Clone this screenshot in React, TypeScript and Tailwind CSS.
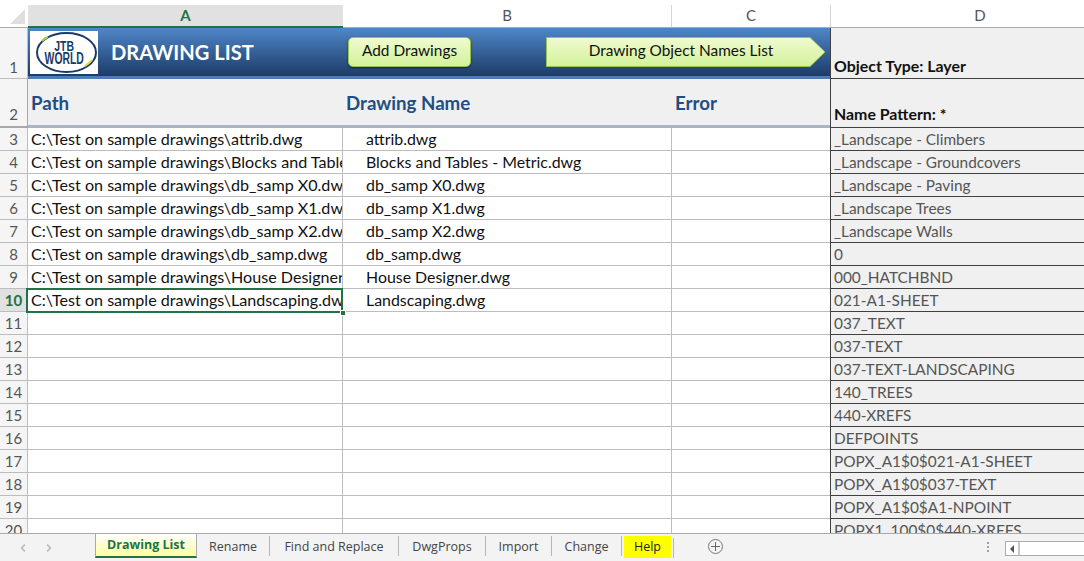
import React from 'react';
import { ChevronLeft, ChevronRight } from 'lucide-react';

const font = "font-['Lato','Noto_Sans',sans-serif]";

const files = [
  ['attrib.dwg', '_Landscape - Climbers'],
  ['Blocks and Tables - Metric.dwg', '_Landscape - Groundcovers'],
  ['db_samp X0.dwg', '_Landscape - Paving'],
  ['db_samp X1.dwg', '_Landscape Trees'],
  ['db_samp X2.dwg', '_Landscape Walls'],
  ['db_samp.dwg', '0'],
  ['House Designer.dwg', '000_HATCHBND'],
  ['Landscaping.dwg', '021-A1-SHEET'],
  ['', '037_TEXT'],
  ['', '037-TEXT'],
  ['', '037-TEXT-LANDSCAPING'],
  ['', '140_TREES'],
  ['', '440-XREFS'],
  ['', 'DEFPOINTS'],
  ['', 'POPX_A1$0$021-A1-SHEET'],
  ['', 'POPX_A1$0$037-TEXT'],
  ['', 'POPX_A1$0$A1-NPOINT'],
  ['', 'POPX1_100$0$440-XREFS'],
];

const tabs = [
  { name: 'Rename', w: 'w-[72px]' },
  { name: 'Find and Replace', w: 'w-[128px]' },
  { name: 'DwgProps', w: 'w-[86px]' },
  { name: 'Import', w: 'w-[65px]' },
  { name: 'Change', w: 'w-[69px]' },
];

const Logo = () => (
  <div className="relative w-[68px] h-[43px] bg-white flex flex-col items-center justify-center ml-[2px] shrink-0 text-[#1c3a66] font-['Liberation_Sans',sans-serif] font-bold leading-[13px]">
    <svg className="absolute left-[6px] top-[1px]" width="61" height="41" viewBox="0 0 61 41">
      <ellipse cx="30.5" cy="20.5" rx="29.5" ry="19.5" fill="none" stroke="#1c3a66" strokeWidth="2" />
      <path d="M6 9 Q9 6 12 5" fill="none" stroke="#a8c83c" strokeWidth="2" />
      <path d="M49 34 Q53 31 56 28" fill="none" stroke="#e6dc3c" strokeWidth="2" />
    </svg>
    <span className="text-[15px] scale-x-[0.7]">JTB</span>
    <span className="text-[16px] scale-x-[0.65]">WORLD</span>
  </div>
);

const Row = ({ n, b, d, selected }: { n: number; b: string; d: string; selected: boolean }) => (
  <div className="flex h-[23px] shrink-0">
    <div className={`w-[28px] shrink-0 flex items-center justify-center border-r border-b border-[#bdbdbd] text-[15px] ${selected ? 'bg-[#e1e1e1] text-[#217346] font-bold border-r-[#217346]' : 'bg-[#f5f5f5] text-[#555]'}`}>
      {n}
    </div>
    <div className="w-[315px] shrink-0 border-r border-b border-[#bdbdbd] bg-white pl-[3px] leading-[21px] text-[16.1px] text-[#111] whitespace-nowrap overflow-hidden">
      {b ? `C:\\Test on sample drawings\\${b}` : ''}
    </div>
    <div className="w-[329px] shrink-0 border-r border-b border-[#bdbdbd] bg-white pl-[23px] leading-[21px] text-[15.9px] text-[#111] whitespace-nowrap overflow-hidden">
      {b}
    </div>
    <div className="w-[159px] shrink-0 border-r border-b border-[#bdbdbd] bg-white" />
    <div className="flex-1 bg-[#f0f0f0] border-l border-b border-[#404040] -ml-px pl-[3px] leading-[23px] text-[15.4px] text-[#555] whitespace-nowrap overflow-hidden">
      {d}
    </div>
  </div>
);

export default function App() {
  return (
    <div className={`relative h-[561px] w-[1084px] overflow-hidden flex flex-col bg-white ${font}`}>
      {/* Column headers */}
      <div className="flex h-[28px] shrink-0 pt-[5px] border-b border-[#ababab] text-[15px] text-[#555] text-center leading-[21px]">
        <div className="w-[28px] shrink-0 flex items-end justify-end pr-[3px] pb-[3px]">
          <div className="w-0 h-0 border-l-[15px] border-l-transparent border-b-[15px] border-b-[#dfdfdf]" />
        </div>
        <div className="w-[315px] shrink-0 bg-[#e1e1e1] text-[#217346] font-bold border-b-2 border-[#217346] h-[23px]">A</div>
        <div className="w-[329px] shrink-0 border-r border-[#d4d4d4]">B</div>
        <div className="w-[159px] shrink-0 border-r border-[#d4d4d4]">C</div>
        <div className="w-[298px] shrink-0">D</div>
      </div>

      {/* Row 1: banner */}
      <div className="flex h-[51px] shrink-0">
        <div className="w-[28px] shrink-0 bg-[#f5f5f5] border-r border-b border-[#bdbdbd] flex items-end justify-center text-[15px] text-[#555] leading-[22px]">1</div>
        <div className="w-[803px] shrink-0 flex items-center pb-[3px] bg-[linear-gradient(#4f86c8,#1c3c68_94%,#4f7cb4_94%)]">
          <Logo />
          <div className="ml-[13px] w-[237px] shrink-0 text-white font-bold text-[20.1px] whitespace-nowrap">DRAWING LIST</div>
          <div className="w-[123px] h-[30px] shrink-0 pb-[2px] rounded-[5px] border border-[#9cc24e] bg-[linear-gradient(#f0fbd0,#d2f29a)] shadow-[0_1px_2px_rgba(0,0,0,0.5)] flex items-center justify-center text-[15.4px] text-[#111]">
            Add Drawings
          </div>
          <div className="relative ml-[75px] w-[280px] h-[30px] shrink-0 pb-[2px] flex items-center justify-center text-[15.4px] text-[#111]">
            <svg className="absolute inset-0" width="280" height="30" viewBox="0 0 280 30">
              <defs>
                <linearGradient id="arrowFill" x1="0" y1="0" x2="0" y2="1">
                  <stop offset="0" stopColor="#f0fbd0" />
                  <stop offset="1" stopColor="#d2f29a" />
                </linearGradient>
              </defs>
              <path d="M0.5 0.5H264L279 15L264 29.5H0.5Z" fill="url(#arrowFill)" stroke="#9cc24e" />
            </svg>
            <span className="relative pr-[10px]">Drawing Object Names List</span>
          </div>
        </div>
        <div className="flex-1 bg-[#f0f0f0] border-b border-l border-[#404040] -ml-px flex items-end pl-[3px] text-[15.9px] font-bold text-[#111] leading-[24px]">
          Object Type: Layer
        </div>
      </div>

      {/* Row 2: column titles */}
      <div className="flex h-[49px] shrink-0">
        <div className="w-[28px] shrink-0 bg-[#f5f5f5] border-r border-b-2 border-[#a8a8a8] flex items-end justify-center text-[15px] text-[#555] leading-[24px]">2</div>
        <div className="w-[803px] shrink-0 pt-[3px] bg-[#f0f0f0] border-b-[3px] border-[#a9b4c6] flex items-center text-[18.7px] font-bold text-[#1f4e84]">
          <div className="w-[315px] pl-[3px]">Path</div>
          <div className="w-[329px] pl-[3px]">Drawing Name</div>
          <div className="pl-[3px]">Error</div>
        </div>
        <div className="flex-1 bg-[#f0f0f0] border-b border-l border-[#404040] -ml-px flex items-end pl-[3px] text-[15.9px] font-bold text-[#111] leading-[26px]">
          Name Pattern: *
        </div>
      </div>

      {/* Data rows */}
      <div className="relative flex-1 min-h-0 flex flex-col overflow-hidden">
        {files.map(([b, d], i) => (
          <Row key={i} n={i + 3} b={b} d={d} selected={i === 7} />
        ))}
        <div className="absolute left-[26px] top-[160px] w-[317px] h-[25px] border-2 border-[#217346] pointer-events-none" />
        <div className="absolute left-[340px] top-[182px] w-[6px] h-[6px] bg-[#217346] border border-white" />
      </div>

      {/* Sheet tabs */}
      <div className="h-[28px] shrink-0 bg-[#f3f3f3] border-t border-[#ababab] flex items-start font-['Open_Sans',sans-serif] text-[12.5px] text-[#444]">
        <div className="w-[95px] shrink-0 h-full flex items-center pl-[17px] gap-[14px] text-[#b5b5b5]">
          <ChevronLeft size={12} strokeWidth={3} />
          <ChevronRight size={12} strokeWidth={3} />
        </div>
        <div className="w-[102px] shrink-0 h-[24px] pt-px border-x border-[#ababab] border-b-2 border-b-[#217346] bg-[linear-gradient(#ffffff,#ffffa0)] flex items-center justify-center font-bold text-[#217346]">
          Drawing List
        </div>
        {tabs.map(t => (
          <div key={t.name} className="flex items-center h-[24px]">
            <div className={`${t.w} shrink-0 text-center leading-[25px] whitespace-nowrap`}>{t.name}</div>
            <div className="w-px h-[20px] bg-[#b5b5b5] shrink-0" />
          </div>
        ))}
        <div className="ml-[2px] mt-[2px] w-[47px] h-[22px] bg-[#ffff00] text-[#222] text-center leading-[21px] shrink-0">Help</div>
        <div className="ml-[2px] mt-[4px] w-px h-[20px] bg-[#b5b5b5] shrink-0" />
        <div className="ml-[34px] mt-[5px] w-[15px] h-[15px] rounded-full border border-[#777] flex items-center justify-center shrink-0 relative">
          <div className="absolute w-[9px] h-[1.5px] bg-[#666]" />
          <div className="absolute w-[1.5px] h-[9px] bg-[#666]" />
        </div>
        <div className="ml-[264px] mt-[8px] flex flex-col gap-[2px] shrink-0">
          <div className="w-[2px] h-[2px] bg-[#a0a0a0]" />
          <div className="w-[2px] h-[2px] bg-[#a0a0a0]" />
          <div className="w-[2px] h-[2px] bg-[#a0a0a0]" />
        </div>
        <div className="ml-[16px] mt-[7px] flex-1 h-[15px] bg-white border border-[#ababab] border-r-0 flex items-center">
          <div className="w-[14px] h-full border-r-2 border-[#c8c8c8] flex items-center justify-center">
            <div className="w-0 h-0 border-y-[4px] border-y-transparent border-r-[4px] border-r-[#555]" />
          </div>
        </div>
      </div>
    </div>
  );
}
